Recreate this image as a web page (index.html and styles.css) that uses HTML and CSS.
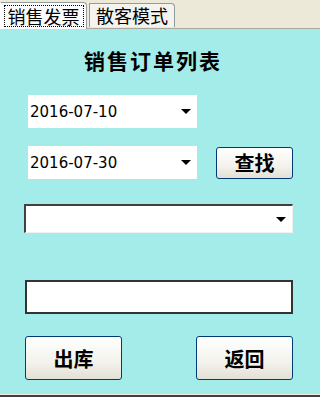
FILE: index.html
```html
<!DOCTYPE html>
<html lang="zh-CN">
<head>
    <meta charset="UTF-8">
    <meta name="viewport" content="width=device-width, initial-scale=1.0">
    <title>销售订单列表</title>
    <link rel="stylesheet" href="styles.css">
</head>
<body>
    <div class="window">
        <div class="tabs">
            <span class="tab active"><span class="focus">销售发票</span></span>
            <span class="tab">散客模式</span>
        </div>

        <div class="panel">
            <div class="title">销售订单列表</div>

            <div class="row first">
                <div class="picker"><span>2016-07-10</span><i class="arrow"></i></div>
            </div>

            <div class="row second">
                <div class="picker"><span>2016-07-30</span><i class="arrow"></i></div>
                <button class="btn search">查找</button>
            </div>

            <div class="combo"><i class="arrow"></i></div>

            <div class="textbox"></div>

            <div class="actions">
                <button class="btn big">出库</button>
                <button class="btn big">返回</button>
            </div>
        </div>

        <div class="footer"></div>
    </div>
</body>
</html>
```

FILE: styles.css
```css
body {
    margin: 0;
    background: #ffffff;
    font-family: "Noto Sans CJK SC", "DejaVu Sans", sans-serif;
}

.window {
    width: 320px;
    height: 400px;
    overflow: hidden;
}

/* Onglets */
.tabs {
    height: 26px;
    padding-top: 2px;
    background: #ece9d8;
    border-bottom: 1px solid #aca899;
    display: flex;
    align-items: flex-end;
    gap: 2px;
    box-sizing: content-box;
}

.tab {
    height: 23px;
    width: 84px;
    background: #f4f3ee;
    border: 1px solid #919b9c;
    border-bottom: none;
    border-radius: 0 4px 0 0;
    font-size: 18px;
    line-height: 23px;
    text-align: center;
    color: #000;
    margin-bottom: 1px;
}

.tab.active {
    height: 26px;
    width: 85px;
    background: #fcfcfe;
    margin-bottom: -1px;
    margin-left: 0;
    border-left-color: #ffffff;
    display: flex;
    align-items: center;
    justify-content: center;
}

.tab .focus {
    border: 1px dotted #000;
    padding: 0 3px;
    line-height: 20px;
}

/* Panneau */
.panel {
    height: 365px;
    background: #a3ecea;
    display: flex;
    flex-direction: column;
    box-sizing: border-box;
    padding-top: 16px;
}

.title {
    font-size: 21px;
    font-weight: bold;
    text-align: center;
    letter-spacing: 2px;
    height: 30px;
    line-height: 30px;
    margin-left: -14px;
}

.row {
    display: flex;
    align-items: center;
    padding-left: 28px;
}

.row.first { margin-top: 20px; }
.row.second { margin-top: 18px; }

.picker {
    width: 169px;
    height: 33px;
    background: #fff;
    display: flex;
    align-items: center;
    justify-content: space-between;
    padding: 0 6px 0 2px;
    box-sizing: border-box;
    font-family: "DejaVu Sans", sans-serif;
    font-size: 15px;
    color: #000;
}

.arrow {
    width: 0;
    height: 0;
    border-left: 5px solid transparent;
    border-right: 5px solid transparent;
    border-top: 5px solid #000;
}

.btn {
    font-family: "Noto Sans CJK SC", sans-serif;
    font-weight: bold;
    color: #000;
    background: linear-gradient(#ffffff, #f3f2ec 60%, #e3e1d5);
    border: 1px solid #003c74;
    border-radius: 3px;
    padding: 0;
}

.btn.search {
    width: 77px;
    height: 32px;
    margin-left: 19px;
    font-size: 20px;
    line-height: 28px;
}

.combo {
    margin: 25px 0 0 24px;
    width: 269px;
    height: 29px;
    background: #fff;
    box-sizing: border-box;
    border-top: 2px solid #404040;
    border-left: 2px solid #404040;
    border-right: 1px solid #f0f0f0;
    border-bottom: 1px solid #f0f0f0;
    display: flex;
    align-items: center;
    justify-content: flex-end;
    padding-right: 6px;
}

.textbox {
    margin: 47px 0 0 25px;
    width: 268px;
    height: 34px;
    background: #fff;
    box-sizing: border-box;
    border: 2px solid #333;
}

.actions {
    display: flex;
    justify-content: space-between;
    margin: 22px 27px 0 25px;
}

.btn.big {
    width: 97px;
    height: 44px;
    font-size: 20px;
}

.footer {
    height: 1px;
    background: #f1efe2;
    border-bottom: 2px solid #404040;
}
```
